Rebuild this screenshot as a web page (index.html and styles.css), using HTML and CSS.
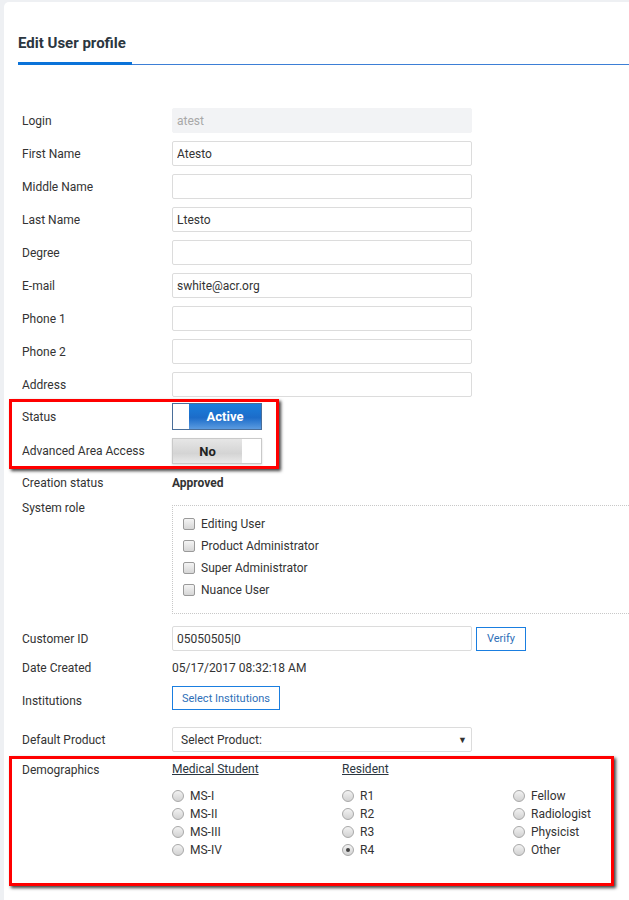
FILE: index.html
```html
<!DOCTYPE html>
<html lang="en">
<head>
  <meta charset="UTF-8">
  <title>Edit User profile</title>
  <link rel="stylesheet" href="styles.css">
</head>
<body>
  <div class="card">
    <div class="card-header">
      <h2 class="title">Edit User profile</h2>
    </div>

    <div class="form">
      <div class="row">
        <label>Login</label>
        <input class="field readonly" type="text" value="atest" readonly>
      </div>
      <div class="row">
        <label>First Name</label>
        <input class="field" type="text" value="Atesto">
      </div>
      <div class="row">
        <label>Middle Name</label>
        <input class="field" type="text" value="">
      </div>
      <div class="row">
        <label>Last Name</label>
        <input class="field" type="text" value="Ltesto">
      </div>
      <div class="row">
        <label>Degree</label>
        <input class="field" type="text" value="">
      </div>
      <div class="row">
        <label>E-mail</label>
        <input class="field" type="text" value="swhite@acr.org">
      </div>
      <div class="row">
        <label>Phone 1</label>
        <input class="field" type="text" value="">
      </div>
      <div class="row">
        <label>Phone 2</label>
        <input class="field" type="text" value="">
      </div>
      <div class="row">
        <label>Address</label>
        <input class="field" type="text" value="">
      </div>

      <!-- status toggles, outlined in red -->
      <div class="marked marked-status">
        <div class="row">
          <label>Status</label>
          <div class="toggle on">
            <span class="knob"></span>
            <span class="face">Active</span>
          </div>
        </div>
        <div class="row">
          <label>Advanced Area Access</label>
          <div class="toggle off">
            <span class="face">No</span>
            <span class="knob"></span>
          </div>
        </div>
      </div>

      <div class="row text-row">
        <label>Creation status</label>
        <span class="value bold">Approved</span>
      </div>

      <div class="row top-row roles-row">
        <label>System role</label>
        <div class="roles">
          <div class="check"><span class="box"></span>Editing User</div>
          <div class="check"><span class="box"></span>Product Administrator</div>
          <div class="check"><span class="box"></span>Super Administrator</div>
          <div class="check"><span class="box"></span>Nuance User</div>
        </div>
      </div>

      <div class="row customer-row">
        <label>Customer ID</label>
        <input class="field" type="text" value="05050505|0">
        <button class="btn-outline verify">Verify</button>
      </div>
      <div class="row text-row">
        <label>Date Created</label>
        <span class="value">05/17/2017 08:32:18 AM</span>
      </div>
      <div class="row inst-row">
        <label class="low">Institutions</label>
        <button class="btn-outline">Select Institutions</button>
      </div>
      <div class="row product-row">
        <label>Default Product</label>
        <div class="select">
          <span>Select Product:</span>
          <span class="arrow">&#9660;</span>
        </div>
      </div>

      <!-- demographics, outlined in red -->
      <div class="marked marked-demo">
        <div class="row top-row">
          <label>Demographics</label>
          <div class="demo">
            <div class="demo-col">
              <div class="demo-head">Medical Student</div>
              <div class="radio"><span class="dot"></span>MS-I</div>
              <div class="radio"><span class="dot"></span>MS-II</div>
              <div class="radio"><span class="dot"></span>MS-III</div>
              <div class="radio"><span class="dot"></span>MS-IV</div>
            </div>
            <div class="demo-col">
              <div class="demo-head">Resident</div>
              <div class="radio"><span class="dot"></span>R1</div>
              <div class="radio"><span class="dot"></span>R2</div>
              <div class="radio"><span class="dot"></span>R3</div>
              <div class="radio"><span class="dot checked"></span>R4</div>
            </div>
            <div class="demo-col">
              <div class="demo-head"></div>
              <div class="radio"><span class="dot"></span>Fellow</div>
              <div class="radio"><span class="dot"></span>Radiologist</div>
              <div class="radio"><span class="dot"></span>Physicist</div>
              <div class="radio"><span class="dot"></span>Other</div>
            </div>
          </div>
        </div>
      </div>
    </div>
  </div>
</body>
</html>
```

FILE: styles.css
```css
html,
body {
  overflow: hidden;
}

body {
  margin: 0;
  background: #eef0f3;
  font-family: Roboto, "Liberation Sans", sans-serif;
  font-size: 12px;
  color: #333;
}

.card {
  margin: 2px -30px 0 4px;
  background: #ffffff;
  border-radius: 5px 0 0 0;
  padding: 0 0 40px 14px;
  min-height: 900px;
}

/* Header */
.card-header {
  padding-top: 32px;
  border-bottom: 1px solid #3d7fd6;
}

.title {
  display: inline-block;
  margin: 0 0 -1px 0;
  width: 114px;
  padding-bottom: 9px;
  font-size: 15px;
  font-weight: 700;
  color: #2b3640;
  line-height: 19px;
  border-bottom: 3px solid #0b73d9;
  white-space: nowrap;
}

/* Form rows */
.form {
  padding: 43px 0 0 4px;
}

.row {
  display: flex;
  align-items: center;
  margin-bottom: 8px;
}

.row label {
  width: 150px;
  flex: none;
  color: #333;
}

.field {
  width: 300px;
  height: 25px;
  box-sizing: border-box;
  border: 1px solid #dcdcdc;
  border-radius: 2px;
  padding: 0 4px;
  font-family: inherit;
  font-size: 12px;
  color: #333;
  outline: none;
}

.field.readonly {
  background: #f2f3f5;
  border-color: #f2f3f5;
  color: #a8a8a8;
}

.text-row {
  height: 18px;
}

.value {
  color: #333;
}

.bold {
  font-weight: 700;
}

/* Toggles */
.toggle {
  display: flex;
  width: 90px;
  height: 25px;
  box-sizing: border-box;
  border: 1px solid #b8b8b8;
  font-weight: 700;
  font-size: 13px;
}

.toggle .knob {
  width: 16px;
  background: #ffffff;
}

.toggle .face {
  flex: 1;
  display: flex;
  align-items: center;
  justify-content: center;
}

.toggle.on {
  height: 27px;
  border-color: #4a6e99;
}

.toggle.on .face {
  background: linear-gradient(#1a7fdc, #1c6cc9 55%, #5b9be0);
  color: #ffffff;
}

.toggle.off {
  height: 26px;
  border-color: #c9c9c9;
  box-shadow: 0 1px 2px rgba(0, 0, 0, 0.15);
}

.toggle.off .knob {
  width: 19px;
}

.toggle.off .face {
  background: linear-gradient(#e6e6e6, #d4d4d4 60%, #e9e9e9);
  color: #222;
}

/* Red annotation frames */
.marked {
  position: relative;
}

.marked::after {
  content: "";
  position: absolute;
  border: 3px solid #ff0000;
  box-shadow: 2px 2px 3px rgba(0, 0, 0, 0.75);
  pointer-events: none;
}

.marked-status {
  margin-top: -2px;
  padding-bottom: 2px;
}

.marked-status::after {
  top: -4px;
  left: -13px;
  width: 264px;
  height: 64px;
}

.marked-demo::after {
  top: -7px;
  left: -13px;
  width: 599px;
  height: 124px;
}

/* System role */
.top-row {
  align-items: flex-start;
}

.roles-row label {
  padding-top: 1px;
}

.roles-row {
  margin-top: 1px;
  margin-bottom: 12px;
}

.roles {
  flex: 1;
  margin-top: 5px;
  border: 1px dotted #c8c8c8;
  border-right: none;
  padding: 7px 0 12px 10px;
}

.check {
  display: flex;
  align-items: center;
  height: 22px;
  color: #333;
}

.check .box {
  width: 10px;
  height: 10px;
  border: 1px solid #9a9a9a;
  border-radius: 2px;
  background: linear-gradient(#f4f4f4, #d6d6d6);
  margin-right: 6px;
}

/* Buttons */
.btn-outline {
  height: 24px;
  background: #ffffff;
  border: 1px solid #1a7ee0;
  border-radius: 0;
  padding: 0 9px;
  font-family: inherit;
  font-size: 11px;
  color: #2e6fb8;
  cursor: pointer;
}

.verify {
  margin-left: 4px;
  width: 50px;
  padding: 0;
}

.inst-row {
  margin-top: 9px;
  margin-bottom: 17px;
}

.inst-row label {
  padding-top: 6px;
}

/* Select */
.select {
  display: flex;
  justify-content: space-between;
  align-items: center;
  width: 300px;
  height: 25px;
  box-sizing: border-box;
  border: 1px solid #dcdcdc;
  border-radius: 2px;
  padding: 0 4px 0 8px;
  color: #333;
}

.select .arrow {
  font-size: 9px;
  color: #333;
}

.product-row {
  margin-bottom: 11px;
}

/* Demographics */
.demo {
  display: flex;
}

.demo-col {
  width: 171px;
}

.demo-col:first-child {
  width: 170px;
}

.demo-head {
  height: 12px;
  margin-top: 0;
  margin-bottom: 12px;
  text-decoration: underline;
  color: #2b3640;
  line-height: 12px;
}

.radio {
  display: flex;
  align-items: center;
  height: 18px;
  color: #333;
}

.radio .dot {
  position: relative;
  width: 10px;
  height: 10px;
  border: 1px solid #a8a8a8;
  border-radius: 50%;
  background: linear-gradient(#f2f2f2, #d2d2d2);
  margin-right: 6px;
}

.radio .dot.checked::after {
  content: "";
  position: absolute;
  top: 3px;
  left: 3px;
  width: 4px;
  height: 4px;
  border-radius: 50%;
  background: #444;
}
```
